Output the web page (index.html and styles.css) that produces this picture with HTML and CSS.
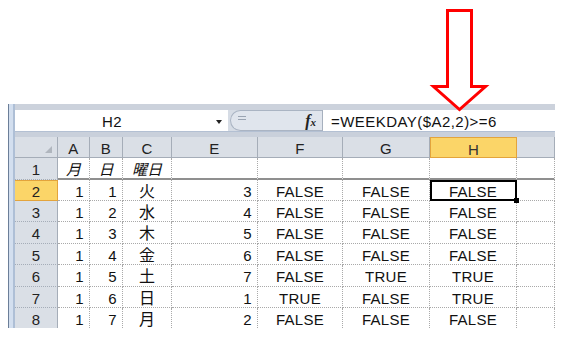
FILE: index.html
```html
<!DOCTYPE html>
<html lang="ja">
<head>
<meta charset="utf-8">
<title>WEEKDAY</title>
<link rel="stylesheet" href="styles.css">
</head>
<body>
<div class="page">
  <svg class="arrow" width="567" height="339" viewBox="0 0 567 339">
    <polygon points="447.5,10.5 471.5,10.5 471.5,86.5 485.5,86.5 459.5,109.5 433.5,86.5 447.5,86.5" fill="#fff" stroke="#ff0000" stroke-width="3"/>
  </svg>
  <div class="window">
    <div class="frame"></div>
    <div class="main">
      <div class="strip"></div>
      <div class="fbar">
        <div class="namebox"><span class="nb-text">H2</span><span class="dd"></span></div>
        <div class="fxbox">
          <span class="handle"><svg width="8" height="5" viewBox="0 0 8 5"><rect x="0" y="0" width="8" height="1" fill="#9aa4b2"/><rect x="0" y="3" width="8" height="1" fill="#9aa4b2"/></svg></span>
          <span class="fx"><i class="f">f</i><i class="x">x</i></span>
        </div>
        <div class="formula">=WEEKDAY($A2,2)&gt;=6</div>
      </div>
      <div class="strip mid"></div>
      <div class="sheet">
        <div class="c h corner"><span class="tri"></span></div>
        <div class="c h">A</div>
        <div class="c h">B</div>
        <div class="c h">C</div>
        <div class="c h">E</div>
        <div class="c h">F</div>
        <div class="c h">G</div>
        <div class="c h hsel">H</div>
        <div class="c h"></div>

        <div class="c rh">1</div>
        <div class="c r1 it">月</div>
        <div class="c r1 it">日</div>
        <div class="c r1 it">曜日</div>
        <div class="c r1"></div>
        <div class="c r1"></div>
        <div class="c r1"></div>
        <div class="c r1"></div>
        <div class="c r1"></div>

        <div class="c rh rsel">2</div>
        <div class="c num">1</div><div class="c num">1</div><div class="c j">火</div><div class="c num">3</div>
        <div class="c ctr">FALSE</div><div class="c ctr">FALSE</div><div class="c ctr active">FALSE</div><div class="c"></div>

        <div class="c rh">3</div>
        <div class="c num">1</div><div class="c num">2</div><div class="c j">水</div><div class="c num">4</div>
        <div class="c ctr">FALSE</div><div class="c ctr">FALSE</div><div class="c ctr">FALSE</div><div class="c"></div>

        <div class="c rh">4</div>
        <div class="c num">1</div><div class="c num">3</div><div class="c j">木</div><div class="c num">5</div>
        <div class="c ctr">FALSE</div><div class="c ctr">FALSE</div><div class="c ctr">FALSE</div><div class="c"></div>

        <div class="c rh">5</div>
        <div class="c num">1</div><div class="c num">4</div><div class="c j">金</div><div class="c num">6</div>
        <div class="c ctr">FALSE</div><div class="c ctr">FALSE</div><div class="c ctr">FALSE</div><div class="c"></div>

        <div class="c rh">6</div>
        <div class="c num">1</div><div class="c num">5</div><div class="c j">土</div><div class="c num">7</div>
        <div class="c ctr">FALSE</div><div class="c ctr">TRUE</div><div class="c ctr">TRUE</div><div class="c"></div>

        <div class="c rh">7</div>
        <div class="c num">1</div><div class="c num">6</div><div class="c j">日</div><div class="c num">1</div>
        <div class="c ctr">TRUE</div><div class="c ctr">FALSE</div><div class="c ctr">TRUE</div><div class="c"></div>

        <div class="c rh">8</div>
        <div class="c num">1</div><div class="c num">7</div><div class="c j">月</div><div class="c num">2</div>
        <div class="c ctr">FALSE</div><div class="c ctr">FALSE</div><div class="c ctr">FALSE</div><div class="c"></div>
      </div>
    </div>
  </div>
</div>
</body>
</html>
```

FILE: styles.css
```css
html, body {
  margin: 0;
  padding: 0;
  background: #ffffff;
}

.page {
  position: relative;
  width: 567px;
  height: 339px;
  overflow: hidden;
  background: #ffffff;
  font-family: "Liberation Sans", "Noto Sans CJK JP", sans-serif;
  color: #111;
}

.arrow {
  position: absolute;
  left: 0;
  top: 0;
  z-index: 5;
  pointer-events: none;
}

.window {
  display: flex;
  margin: 104px 0 0 8px;
  width: 547px;
  height: 224px;
  overflow: hidden;
}

.frame {
  width: 7px;
  flex: none;
  background: linear-gradient(to right, #6b7e98 0 1px, #d3dfef 1px 5px, #aebfd6 5px 7px);
}

.main {
  width: 540px;
  flex: none;
}

.strip {
  height: 6px;
  background: #ccd2dc;
}

.strip.mid {
  height: 6px;
  background: #c9d0db;
  border-top: 1px solid #b3c0d3;
  box-sizing: border-box;
}

.fbar {
  display: flex;
  height: 21px;
  background: #d6dce5;
}

.namebox {
  width: 213px;
  display: flex;
  align-items: center;
  background: #ffffff;
}

.nb-text {
  width: 194px;
  text-align: center;
  font-size: 15px;
  letter-spacing: 0.3px;
  padding-top: 1px;
}

.dd {
  width: 0;
  height: 0;
  margin-left: 7px;
  margin-top: 2px;
  border-left: 3px solid transparent;
  border-right: 3px solid transparent;
  border-top: 4px solid #222;
}

.fxbox {
  width: 92px;
  margin-left: 2px;
  box-sizing: border-box;
  display: flex;
  align-items: center;
  justify-content: space-between;
  background: #e0e5ed;
  border: 1px solid #aab4c3;
  border-right: none;
  border-radius: 11px 0 0 11px;
  padding: 0 6px 0 7px;
}

.handle {
  display: flex;
  margin-top: -4px;
}

.fx {
  font-family: "Liberation Serif", serif;
  font-weight: bold;
  color: #222;
  line-height: 1;
}

.fx .f {
  font-size: 16px;
}

.fx .x {
  font-size: 11px;
}

.formula {
  flex: 1;
  background: #ffffff;
  border-left: 1px solid #a6b0be;
  padding-left: 8px;
  font-size: 15px;
  letter-spacing: 0.45px;
  line-height: 20px;
  padding-top: 2px;
  box-sizing: border-box;
  white-space: nowrap;
}

.sheet {
  display: grid;
  grid-template-columns: 43px 32px 33px 49px 86px 85px 87px 87px 38px;
  grid-template-rows: 21px 22px 21px 21px 22px 21px 22px 21px 22px;
  background: #ffffff;
}

.c {
  box-sizing: border-box;
  border-right: 1px dotted #a9a9a9;
  border-bottom: 1px dotted #a9a9a9;
  font-size: 15px;
  letter-spacing: 0.3px;
  line-height: 20px;
  padding-top: 2px;
  white-space: nowrap;
  overflow: hidden;
}

.h {
  background: #dadfe6;
  border-right: 1px solid #a5adb8;
  border-bottom: 1px solid #a5adb8;
  text-align: center;
  color: #222;
}

.corner {
  position: relative;
}

.tri {
  position: absolute;
  right: 5px;
  bottom: 4px;
  width: 0;
  height: 0;
  border-left: 7px solid transparent;
  border-bottom: 7px solid #b0b6be;
}

.hsel {
  background: #fbd568;
  border: 1px solid #e3a43c;
  color: #333;
}

.rh {
  background: #dadfe6;
  border-right: 1px solid #a5adb8;
  border-bottom: 1px dotted #a5adb8;
  text-align: center;
  color: #222;
}

.rsel {
  background: #fbd568;
  border-top: 1px solid #e3a43c;
  border-bottom: 1px solid #e3a43c;
  border-right: 1px solid #e3a43c;
  padding-top: 1px;
}

.r1 {
  border-bottom: 2px solid #8f8f8f;
}

.it {
  font-style: italic;
  text-align: center;
  font-size: 15px;
  letter-spacing: 0;
}

.num {
  text-align: right;
  padding-right: 5px;
}

.j {
  text-align: center;
  font-size: 16px;
  letter-spacing: 0;
}

.ctr {
  text-align: center;
}

.active {
  position: relative;
  overflow: visible;
}

.active::after {
  content: "";
  position: absolute;
  left: 0;
  top: 0;
  right: -1px;
  bottom: -1px;
  border: 2px solid #000;
}

.active::before {
  content: "";
  position: absolute;
  right: -3px;
  bottom: -3px;
  width: 5px;
  height: 5px;
  background: #000;
  z-index: 2;
}
```
